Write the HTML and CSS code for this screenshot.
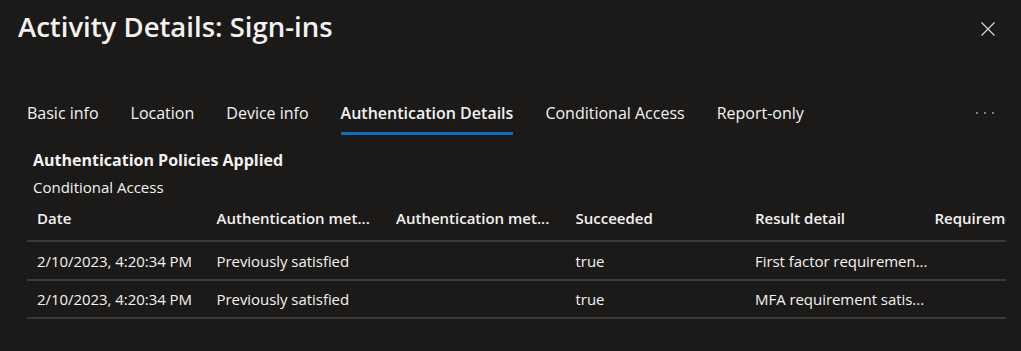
FILE: index.html
```html
<!DOCTYPE html>
<html lang="en">
<head>
    <meta charset="UTF-8">
    <title>Activity Details: Sign-ins</title>
    <link rel="stylesheet" href="styles.css">
</head>
<body>
    <div class="panel">
        <div class="panel-header">
            <h1>Activity Details: Sign-ins</h1>
            <button class="close-button" aria-label="Close">
                <svg width="14" height="14" viewBox="0 0 14 14">
                    <path d="M0.5 0.5 L13.5 13.5 M13.5 0.5 L0.5 13.5" stroke="#d6d6d6" stroke-width="1.2" fill="none"/>
                </svg>
            </button>
        </div>

        <div class="tabs">
            <div class="tab-list">
                <span class="tab">Basic info</span>
                <span class="tab">Location</span>
                <span class="tab">Device info</span>
                <span class="tab active">Authentication Details</span>
                <span class="tab">Conditional Access</span>
                <span class="tab">Report-only</span>
            </div>
            <span class="more" aria-label="More">
                <i></i><i></i><i></i>
            </span>
        </div>

        <div class="section">
            <h2>Authentication Policies Applied</h2>
            <div class="subtitle">Conditional Access</div>

            <div class="table-wrap">
                <table class="grid">
                    <thead>
                        <tr>
                            <th>Date</th>
                            <th>Authentication met...</th>
                            <th>Authentication met...</th>
                            <th>Succeeded</th>
                            <th>Result detail</th>
                            <th>Requirement</th>
                        </tr>
                    </thead>
                    <tbody>
                        <tr>
                            <td>2/10/2023, 4:20:34 PM</td>
                            <td>Previously satisfied</td>
                            <td></td>
                            <td>true</td>
                            <td>First factor requiremen...</td>
                            <td></td>
                        </tr>
                        <tr>
                            <td>2/10/2023, 4:20:34 PM</td>
                            <td>Previously satisfied</td>
                            <td></td>
                            <td>true</td>
                            <td>MFA requirement satis...</td>
                            <td></td>
                        </tr>
                    </tbody>
                </table>
            </div>
        </div>
    </div>
</body>
</html>
```

FILE: styles.css
```css
body {
    margin: 0;
    padding: 0;
    background: #1b1a19;
    color: #f3f2f1;
    font-family: "Open Sans", Arial, sans-serif;
}

.panel {
    width: 1021px;
    height: 351px;
    overflow: hidden;
}

.panel-header {
    display: flex;
    justify-content: space-between;
    align-items: flex-start;
    padding: 9px 26px 0 18px;
}

h1 {
    margin: 0;
    font-size: 27.5px;
    font-weight: 600;
    line-height: 36px;
    color: #f3f2f1;
}

.close-button {
    background: none;
    border: none;
    padding: 0;
    margin-top: 13px;
    width: 14px;
    height: 14px;
    cursor: pointer;
}

.close-button svg {
    display: block;
}

.tabs {
    display: flex;
    justify-content: space-between;
    align-items: center;
    margin-top: 52px;
    padding: 0 27px 0 11px;
}

.tab-list {
    display: flex;
}

.tab {
    position: relative;
    padding: 6px 16px 12px;
    font-size: 16px;
    line-height: 20px;
    color: #f3f2f1;
}

.tab.active {
    font-weight: 600;
}

.tab.active::after {
    content: "";
    position: absolute;
    left: 16px;
    right: 16px;
    bottom: 0;
    height: 3px;
    background: #0f6cbd;
}

.more {
    display: flex;
    gap: 6px;
    padding-bottom: 6px;
}

.more i {
    width: 2px;
    height: 2px;
    border-radius: 50%;
    background: #a19f9d;
}

.section {
    padding: 14px 15px 0 27px;
}

h2 {
    margin: 0 0 0 6px;
    font-size: 16px;
    font-weight: 700;
    line-height: 22px;
}

.subtitle {
    margin: 6px 0 0 6px;
    font-size: 15px;
    line-height: 20px;
}

.table-wrap {
    overflow: hidden;
    margin-top: 3px;
}

.grid {
    border-collapse: collapse;
    table-layout: fixed;
    width: 1077px;
    font-size: 15px;
}

.grid th,
.grid td {
    width: 169.5px;
    padding: 0 0 0 10px;
    text-align: left;
    white-space: nowrap;
}

.grid th {
    height: 36px;
    padding-bottom: 4px;
    font-weight: 600;
    border-bottom: 2px solid #3b3a39;
}

.grid td {
    height: 35.5px;
    padding-top: 1px;
    letter-spacing: -0.05px;
    border-bottom: 2px solid #3b3a39;
}
```
